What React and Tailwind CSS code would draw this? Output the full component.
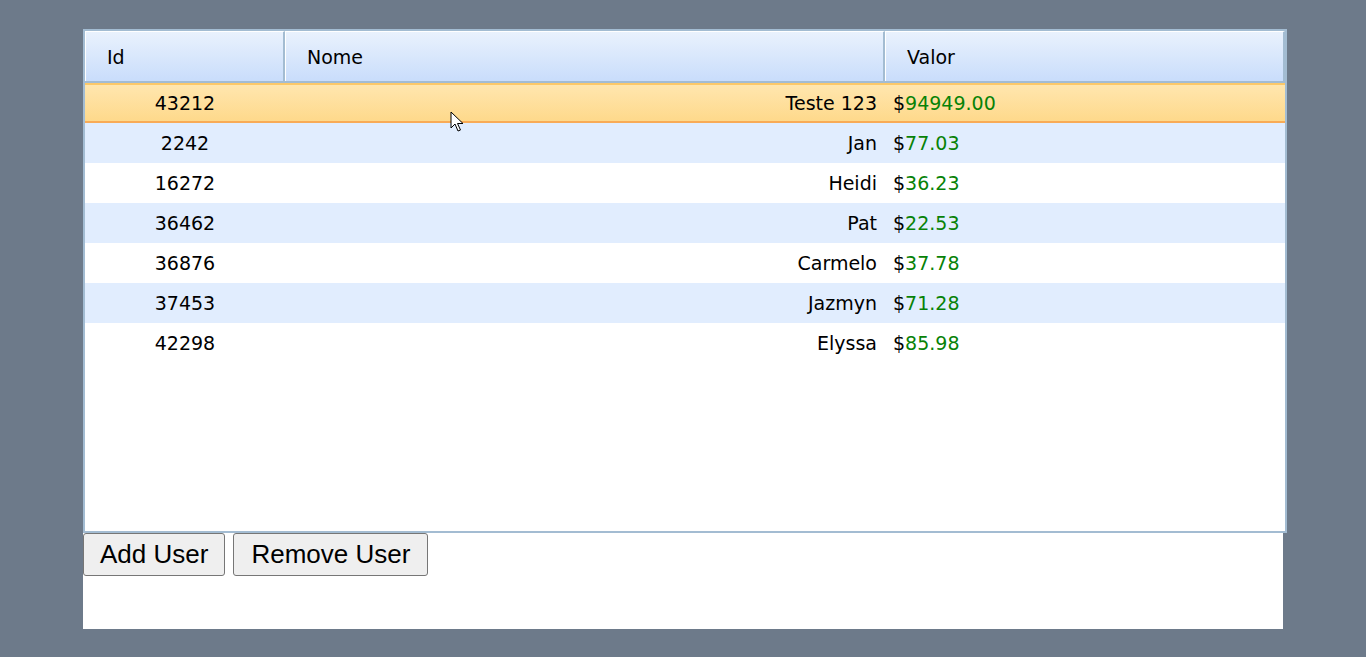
const users = [
  { id: 43212, name: 'Teste 123', value: '94949.00' },
  { id: 2242, name: 'Jan', value: '77.03' },
  { id: 16272, name: 'Heidi', value: '36.23' },
  { id: 36462, name: 'Pat', value: '22.53' },
  { id: 36876, name: 'Carmelo', value: '37.78' },
  { id: 37453, name: 'Jazmyn', value: '71.28' },
  { id: 42298, name: 'Elyssa', value: '85.98' },
]

const font = { fontFamily: '"DejaVu Sans", Verdana, sans-serif' }

function Cursor() {
  return (
    <svg className="absolute left-[450px] top-[111px]" width="14" height="22" viewBox="0 0 14 22">
      <path
        d="M1 1 L1 17 L5 13 L8 20 L10.5 19 L7.5 12.5 L13 12.5 Z"
        fill="#fff"
        stroke="#000"
        strokeWidth="1"
        strokeLinejoin="miter"
      />
    </svg>
  )
}

export default function App() {
  return (
    <div className="relative min-h-[657px] bg-[#6d7a8a] pl-[83px] pt-[29px]">
      <div className="w-[1200px] h-[600px] bg-white">
        {/* Grid */}
        <div
          className="w-[1204px] h-[504px] border-2 border-[#a3bcd2] bg-white text-[19px] text-black"
          style={font}
        >
          {/* Header */}
          <div className="flex h-[52px] border-b-2 border-[#a3bcd2] bg-gradient-to-b from-[#eaf2fd] to-[#c9ddfb]">
            <div className="w-[200px] flex items-center pl-[21px] pt-[2px] border-l border-t border-white border-r-2 border-r-[#a3bcd2]">Id</div>
            <div className="w-[600px] flex items-center pl-[21px] pt-[2px] border-l border-t border-white border-r-2 border-r-[#a3bcd2]">Nome</div>
            <div className="w-[400px] flex items-center pl-[21px] pt-[2px] border-l border-t border-white border-r-2 border-r-[#a3bcd2]">Valor</div>
          </div>

          {/* Rows */}
          {users.map((u, i) => (
            <div
              key={u.id}
              className={`flex h-[40px] items-center ${
                i === 0
                  ? 'bg-gradient-to-b from-[#ffe6ae] to-[#fed98b] border-t-2 border-t-[#fcc868] border-b-2 border-b-[#f8ab57]'
                  : i % 2 === 1
                  ? 'bg-[#e1edfe]'
                  : 'bg-white'
              }`}
            >
              <div className="w-[200px] text-center">{u.id}</div>
              <div className="w-[600px] text-right pr-2">{u.name}</div>
              <div className="w-[400px] pl-2">
                $<span className="text-[#078207]">{u.value}</span>
              </div>
            </div>
          ))}
        </div>

        {/* Buttons */}
        <div className="flex gap-2" style={{ fontFamily: '"Liberation Sans", Arial, sans-serif' }}>
          <button className="h-[43px] px-[16px] text-[26px] text-black bg-[#efefef] border border-[#767676] rounded-[3px]">
            Add User
          </button>
          <button className="h-[43px] px-[17px] text-[26px] text-black bg-[#efefef] border border-[#767676] rounded-[3px]">
            Remove User
          </button>
        </div>
      </div>
      <Cursor />
    </div>
  )
}
